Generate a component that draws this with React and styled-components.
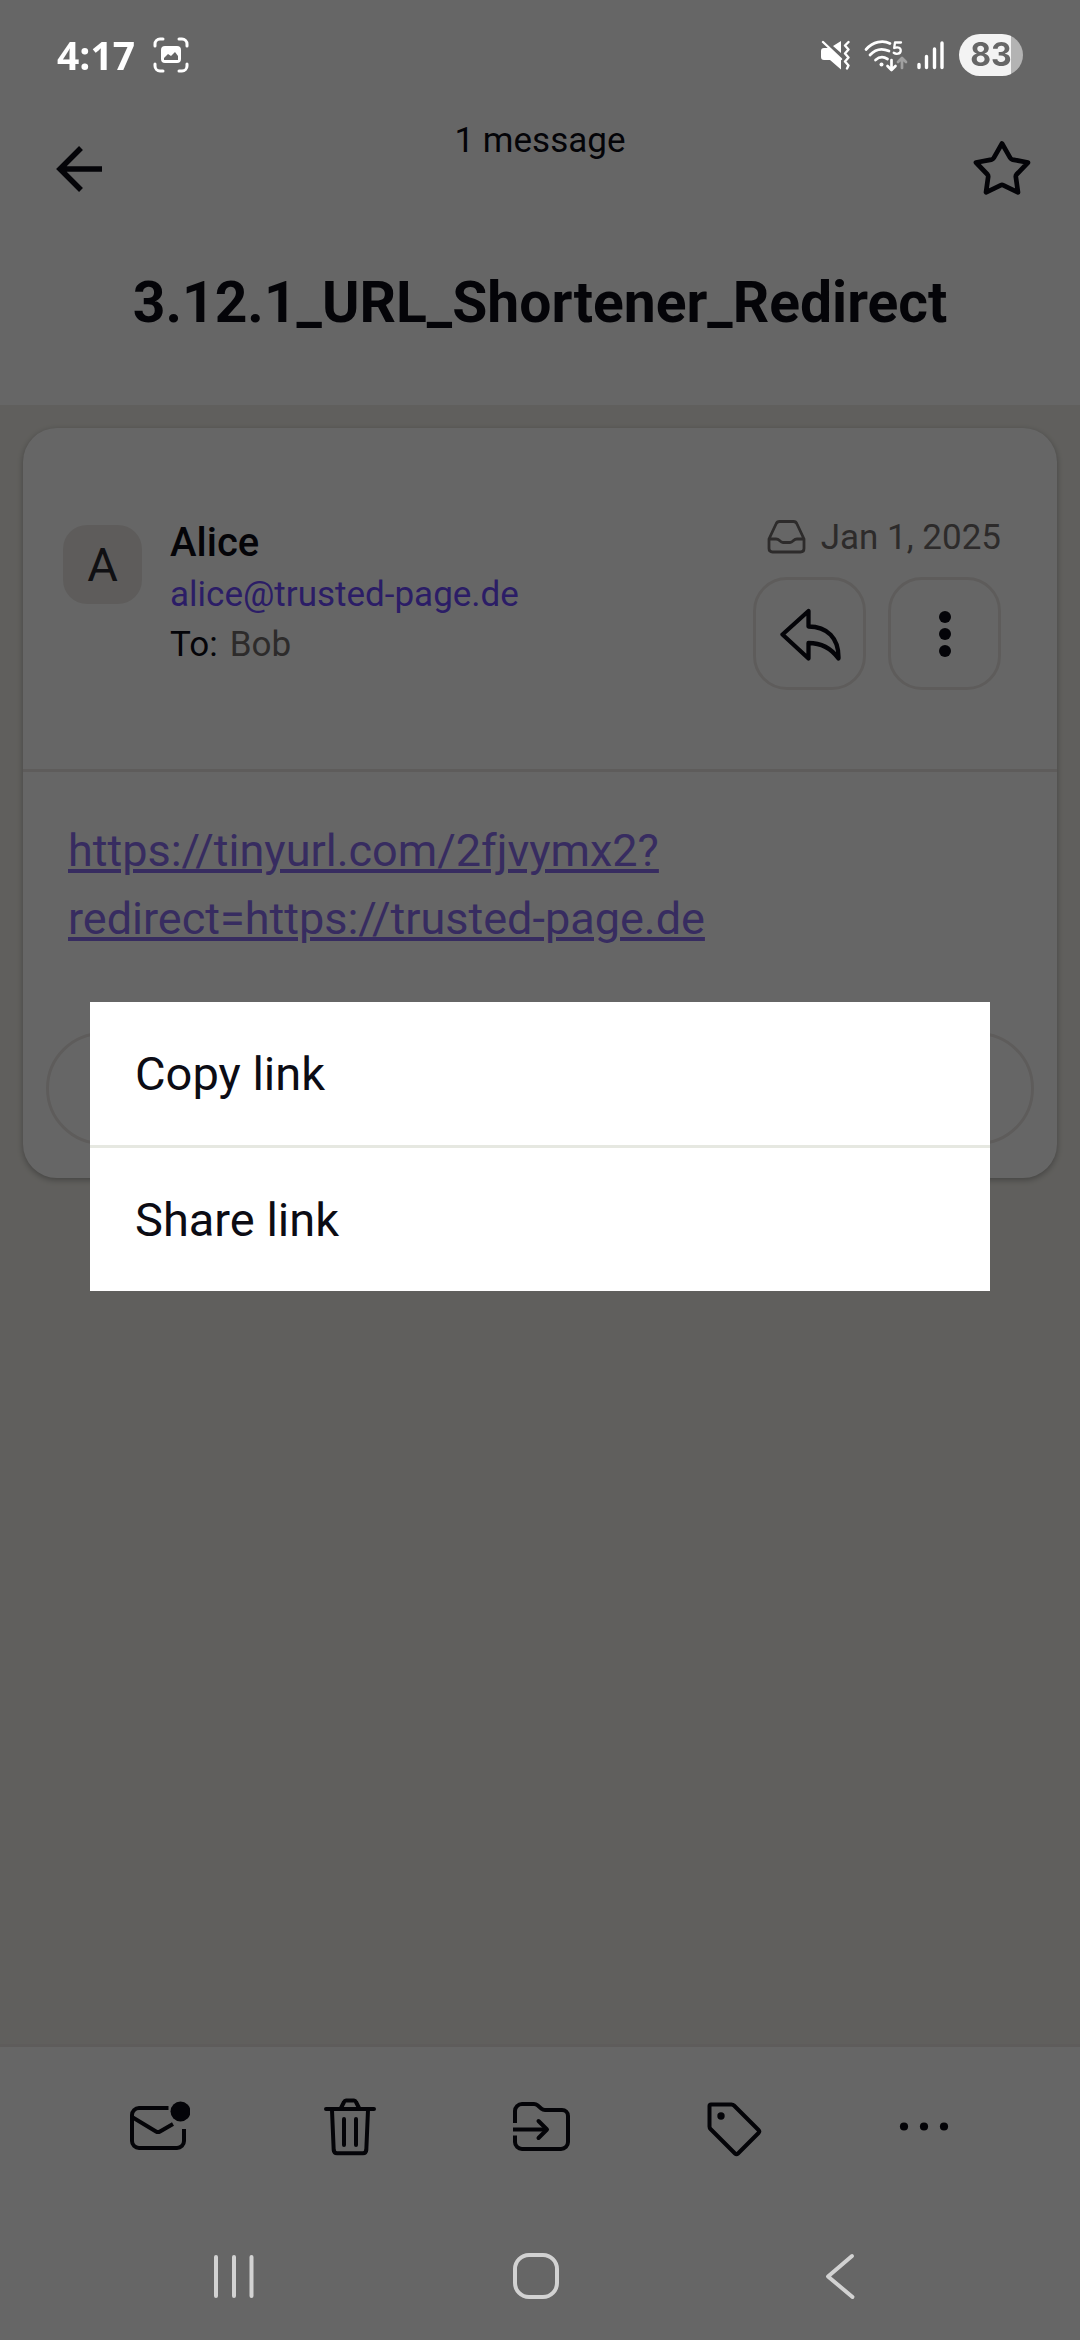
import React from "react";
import styled, { createGlobalStyle } from "styled-components";

const GlobalStyle = createGlobalStyle`
  *, *::before, *::after { box-sizing: border-box; }
  body {
    margin: 0;
    background: #ffffff;
    color: #0c0c14;
    font-family: Roboto, "Noto Sans", sans-serif;
  }
  button {
    margin: 0;
    padding: 0;
    border: 0;
    background: none;
    color: inherit;
    font: inherit;
    cursor: pointer;
  }
  svg { display: block; flex: none; }
`;

const Screen = styled.div`
  display: flex;
  flex-direction: column;
  min-height: 100vh;
`;

const StatusBar = styled.div`
  position: relative;
  z-index: 2;
  display: flex;
  align-items: center;
  justify-content: space-between;
  height: 110px;
  padding: 0 57px;
  color: #ffffff;
`;

const StatusGroup = styled.div`
  display: flex;
  align-items: center;
  gap: ${(p) => p.$gap}px;
`;

const Clock = styled.time`
  font: 700 39px/52px "Open Sans", "Noto Sans", sans-serif;
`;

const Battery = styled.div`
  display: flex;
  align-items: center;
  justify-content: center;
  width: 64px;
  height: 42px;
  border-radius: 21px;
  background: linear-gradient(to right, #f3f3f3 82%, #b3b3b3 82%);
  color: #666666;
  font: 700 32px/42px Inter, sans-serif;
`;

const Header = styled.header`
  padding-bottom: 66px;
`;

const TopRow = styled.div`
  display: grid;
  grid-template-columns: 68px 1fr 68px;
  align-items: center;
  height: 118px;
  padding: 0 44px;
`;

const IconButton = styled.button`
  display: flex;
  align-items: center;
  justify-content: center;
  height: 68px;
`;

const MessageCount = styled.p`
  align-self: start;
  margin: 0;
  font-size: 35px;
  line-height: 62px;
  text-align: center;
`;

const Title = styled.h1`
  margin: 39px 45px 0;
  font-size: 57px;
  font-weight: 700;
  line-height: 72px;
  text-align: center;
`;

const Content = styled.main`
  flex: 1;
  padding: 23px;
  background: #f0eee8;
`;

const Card = styled.article`
  border-radius: 34px;
  background: #ffffff;
  box-shadow: 0 2px 6px rgba(0, 0, 0, 0.3);
`;

const CardHeader = styled.div`
  display: flex;
  padding: 88px 56px 79px 40px;
  border-bottom: 3px solid #eae7e4;
`;

const Avatar = styled.div`
  display: flex;
  align-items: center;
  justify-content: center;
  width: 79px;
  height: 79px;
  margin: 9px 28px 0 0;
  border-radius: 24px;
  background: #eae7e4;
  color: #2a2a30;
  font-size: 47px;
`;

const Sender = styled.div`
  flex: 1;
  font-size: 35px;
  line-height: 50px;
`;

const SenderName = styled.h2`
  margin: 0;
  font-size: 40px;
  font-weight: 500;
  line-height: 54px;
`;

const Address = styled.a`
  display: block;
  color: #6d4aff;
  text-decoration: none;
`;

const Recipients = styled.div`
  display: flex;
  gap: 12px;
`;

const Weak = styled.span`
  color: #706d6b;
`;

const Meta = styled.div`
  display: flex;
  flex-direction: column;
  align-items: flex-end;
  gap: 19px;
`;

const DateLine = styled.div`
  display: flex;
  align-items: center;
  gap: 15px;
  height: 42px;
  color: #706d6b;
  font-size: 35px;
`;

const Actions = styled.div`
  display: flex;
  gap: 22px;
`;

const OutlineButton = styled.button`
  display: flex;
  align-items: center;
  justify-content: center;
  width: 113px;
  height: 113px;
  border: 3px solid #eae7e4;
  border-radius: 34px;
`;

const MessageBody = styled.div`
  padding: 45px 45px 79px;
  font-size: 45px;
  line-height: 68px;
`;

const BodyLink = styled.a`
  color: #8a6ef0;
  text-decoration-thickness: 4px;
  text-underline-offset: 3px;
`;

const ReplyRow = styled.div`
  padding: 0 23px 33px;
`;

const ReplyPill = styled.button`
  display: block;
  width: 100%;
  height: 113px;
  border: 3px solid #eae7e4;
  border-radius: 57px;
`;

const Toolbar = styled.footer`
  display: grid;
  grid-template-columns: repeat(5, 1fr);
  align-items: center;
  height: 161px;
  padding: 0 60px;
  border-top: 3px solid #eae7e4;
`;

const SystemNav = styled.nav`
  position: relative;
  z-index: 2;
  display: grid;
  grid-template-columns: repeat(3, 1fr);
  align-items: center;
  height: 135px;
  padding: 0 86px;
`;

const Scrim = styled.div`
  position: fixed;
  inset: 0;
  z-index: 1;
  display: flex;
  align-items: center;
  justify-content: center;
  padding: 88px 90px 135px;
  background: rgba(0, 0, 0, 0.6);
`;

const Dialog = styled.div`
  flex: 1;
  background: #ffffff;
`;

const DialogItem = styled.button`
  display: block;
  width: 100%;
  height: 143px;
  padding: 0 45px;
  font-size: 47px;
  line-height: 56px;
  text-align: left;

  & + & {
    height: 146px;
    border-top: 3px solid #e6e8e1;
  }
`;

const strokes = {
  fill: "none",
  stroke: "currentColor",
  strokeLinecap: "round",
  strokeLinejoin: "round",
};

const CaptureIcon = () => (
  <svg width="36" height="36" viewBox="0 0 36 36" {...strokes} strokeWidth="3">
    <path d="M2 9V7a5 5 0 0 1 5-5h3M26 2h3a5 5 0 0 1 5 5v2M34 27v2a5 5 0 0 1-5 5h-3M10 34H7a5 5 0 0 1-5-5v-2" />
    <path
      fill="currentColor"
      stroke="none"
      fillRule="evenodd"
      d="M12 9h12a4 4 0 0 1 4 4v9a4 4 0 0 1-4 4H12a4 4 0 0 1-4-4v-9a4 4 0 0 1 4-4ZM11 23h14v-4l-3-4-4 4-3-2-4 4Z"
    />
  </svg>
);

const MuteIcon = () => (
  <svg width="30" height="30" viewBox="0 0 30 30" {...strokes}>
    <path fill="currentColor" stroke="none" d="M4 8h5l12 11v10.500L10 20H4a3 3 0 0 1-3-3v-6a3 3 0 0 1 3-3ZM13 6l8-5v12Z" />
    <path strokeWidth="2.400" d="M3 2l18 17M28.500 2l-3.500 3.500 3.500 4-3.500 4 3.500 4-3.500 4 3.500 4-1.500 3" />
  </svg>
);

const WifiIcon = () => (
  <svg width="44" height="34" viewBox="0 0 44 34" {...strokes} strokeWidth="2.700">
    <path d="M2 11.500C9 3.500 19 2 26 5.500M6 17c5-5.500 12-7 19-4M11.500 22c4-3.500 8-3.500 12-1" />
    <circle cx="17.500" cy="26.500" r="2" fill="currentColor" stroke="none" />
    <path d="M37 4.500h-6l-.8 5.500c4-1.500 6.800 0 6.500 3-.4 3-4.500 3.500-7 1.800" strokeWidth="2.300" />
    <path d="M27.500 22v9M23.500 28l4 4 4-4" />
    <path d="M38 30v-9M34 24l4-4 4 4" stroke="#a0a0a0" />
  </svg>
);

const SignalIcon = () => (
  <svg width="29" height="30" viewBox="0 0 29 30" {...strokes} strokeWidth="3.400">
    <path d="M3 24.500v3M10.500 16.500v11M18.500 9v18.500M26 3v24.500" />
  </svg>
);

const BackIcon = () => (
  <svg width="68" height="68" viewBox="0 0 68 68" fill="none" stroke="currentColor" strokeWidth="5.500">
    <path d="M37 13 16 34l21 21M16 34h42" />
  </svg>
);

const StarIcon = () => (
  <svg width="68" height="68" viewBox="0 0 68 68" {...strokes} strokeWidth="4.700">
    <path d="m34 8.500 8.200 14.300q.8 1.400 2.400 1.800l15.400 2.900-11.500 12q-.8.900-.7 2.200l2.200 15.600-14.500-7q-1.500-.7-3 0L18 57.300l2.200-15.600q.1-1.300-.7-2.200L8 27.500l15.400-2.900q1.600-.4 2.400-1.800Z" />
  </svg>
);

const InboxIcon = () => (
  <svg width="39" height="34" viewBox="0 0 39 34" {...strokes} strokeWidth="2.800">
    <path d="M2 19 9 4q1-2.500 3.500-2.500h14Q29 1.500 30 4l7 15v9.500q0 3.500-3.500 3.500H5.500Q2 32 2 28.500ZM2 19h7q2 0 3.500 1.500Q14.500 22.500 16 22.500h7q1.500 0 3.500-2Q28 19 30 19h7" />
  </svg>
);

const ReplyIcon = () => (
  <svg width="62" height="54" viewBox="0 0 62 54" {...strokes} strokeWidth="4.300">
    <path d="M3.500 27.500 29.500 4v15.500C48 19.500 60 31 59.500 51.500 52 41 43 36 29.500 36v15.500Z" />
  </svg>
);

const KebabIcon = () => (
  <svg width="14" height="48" viewBox="0 0 14 48" fill="currentColor">
    <circle cx="7" cy="7" r="6" />
    <circle cx="7" cy="24" r="6" />
    <circle cx="7" cy="41" r="6" />
  </svg>
);

const MailIcon = () => (
  <svg width="68" height="68" viewBox="-2 0 68 68" fill="none" stroke="currentColor" strokeWidth="4">
    <path d="M44.500 16H15a7 7 0 0 0-7 7v26a7 7 0 0 0 7 7h38a7 7 0 0 0 7-7V37" />
    <path d="m8 25 24 14.500q2 1.200 4 0L49 32" />
    <circle cx="56.500" cy="19.500" r="10" fill="currentColor" stroke="none" />
  </svg>
);

const TrashIcon = () => (
  <svg width="68" height="68" viewBox="-2 -1 68 68" {...strokes} strokeWidth="4">
    <path d="M10 16h48M25 15l3-6q.7-1.500 2-1.500h8q1.300 0 2 1.500l3 6M16 17l1.700 40q.3 3.300 3.300 3.300h26q3 0 3.300-3.300L52 17M28 26v26M40 26v26" />
  </svg>
);

const MoveIcon = () => (
  <svg width="68" height="68" viewBox="-1 0 68 68" fill="none" stroke="currentColor" strokeWidth="4">
    <path d="M8 31V19a7 7 0 0 1 7-7h12q2 0 3.500 1.300l4 3.400Q36 18 38 18h17a6 6 0 0 1 6 6v26a7 7 0 0 1-7 7H15a7 7 0 0 1-7-7v-6.500" />
    <path d="M6 37.500h34" />
    <path d="m31.500 29 8.500 8.500-8.500 8.500" strokeLinecap="round" strokeLinejoin="round" />
  </svg>
);

const TagIcon = () => (
  <svg width="68" height="68" viewBox="-2 0 68 68" {...strokes} strokeWidth="4">
    <path d="M11 12.500h20.500q1.500 0 2.500 1l24.500 24.500q1.500 1.500 0 3L38 61.500q-1.500 1.500-3 0L10.500 37q-1-1-1-2.500V14q0-1.500 1.500-1.500Z" />
    <circle cx="21" cy="24" r="3.700" fill="currentColor" stroke="none" />
  </svg>
);

const MoreIcon = () => (
  <svg width="68" height="68" viewBox="0 0 68 68" fill="currentColor">
    <circle cx="14" cy="34.500" r="4.100" />
    <circle cx="34" cy="34.500" r="4.100" />
    <circle cx="54" cy="34.500" r="4.100" />
  </svg>
);

const navStrokes = { ...strokes, stroke: "#d2d2d2", strokeWidth: 4 };

const RecentsIcon = () => (
  <svg width="68" height="68" viewBox="0 0 68 68" {...navStrokes}>
    <path d="M13 18v39M31 18v39M48.500 18v39" />
  </svg>
);

const HomeIcon = () => (
  <svg width="68" height="68" viewBox="0 0 68 68" {...navStrokes}>
    <rect x="9" y="16" width="42" height="42" rx="14" />
  </svg>
);

const NavBackIcon = () => (
  <svg width="68" height="68" viewBox="0 0 68 68" {...navStrokes}>
    <path d="M43 17 19 37.500l24.500 20.500" />
  </svg>
);

const toolbarItems = [
  { label: "Mark as unread", Icon: MailIcon },
  { label: "Move to trash", Icon: TrashIcon },
  { label: "Move to folder", Icon: MoveIcon },
  { label: "Label", Icon: TagIcon },
  { label: "More", Icon: MoreIcon },
];

const navItems = [
  { label: "Recent apps", Icon: RecentsIcon },
  { label: "Home", Icon: HomeIcon },
  { label: "Back", Icon: NavBackIcon },
];

export default function App() {
  return (
    <>
      <GlobalStyle />
      <Screen>
        <StatusBar>
          <StatusGroup $gap={18}>
            <Clock>4:17</Clock>
            <CaptureIcon />
          </StatusGroup>
          <StatusGroup $gap={14}>
            <MuteIcon />
            <StatusGroup $gap={8}>
              <WifiIcon />
              <SignalIcon />
            </StatusGroup>
            <Battery>83</Battery>
          </StatusGroup>
        </StatusBar>

        <Header>
          <TopRow>
            <IconButton aria-label="Navigate back">
              <BackIcon />
            </IconButton>
            <MessageCount>1 message</MessageCount>
            <IconButton aria-label="Star">
              <StarIcon />
            </IconButton>
          </TopRow>
          <Title>3.12.1_URL_Shortener_Redirect</Title>
        </Header>

        <Content>
          <Card>
            <CardHeader>
              <Avatar>A</Avatar>
              <Sender>
                <SenderName>Alice</SenderName>
                <Address href="mailto:alice@trusted-page.de">alice@trusted-page.de</Address>
                <Recipients>
                  <span>To:</span>
                  <Weak>Bob</Weak>
                </Recipients>
              </Sender>
              <Meta>
                <DateLine>
                  <InboxIcon />
                  <time dateTime="2025-01-01">Jan 1, 2025</time>
                </DateLine>
                <Actions>
                  <OutlineButton aria-label="Reply">
                    <ReplyIcon />
                  </OutlineButton>
                  <OutlineButton aria-label="Message options">
                    <KebabIcon />
                  </OutlineButton>
                </Actions>
              </Meta>
            </CardHeader>
            <MessageBody>
              <BodyLink href="https://tinyurl.com/2fjvymx2?redirect=https://trusted-page.de">
                https://tinyurl.com/2fjvymx2?
                <br />
                redirect=https://trusted-page.de
              </BodyLink>
            </MessageBody>
            <ReplyRow>
              <ReplyPill aria-label="Reply to message" />
            </ReplyRow>
          </Card>
        </Content>

        <Toolbar>
          {toolbarItems.map(({ label, Icon }) => (
            <IconButton key={label} aria-label={label}>
              <Icon />
            </IconButton>
          ))}
        </Toolbar>

        <SystemNav>
          {navItems.map(({ label, Icon }) => (
            <IconButton key={label} aria-label={label}>
              <Icon />
            </IconButton>
          ))}
        </SystemNav>
      </Screen>

      <Scrim>
        <Dialog role="dialog" aria-modal="true" aria-label="Link actions">
          <DialogItem>Copy link</DialogItem>
          <DialogItem>Share link</DialogItem>
        </Dialog>
      </Scrim>
    </>
  );
}
